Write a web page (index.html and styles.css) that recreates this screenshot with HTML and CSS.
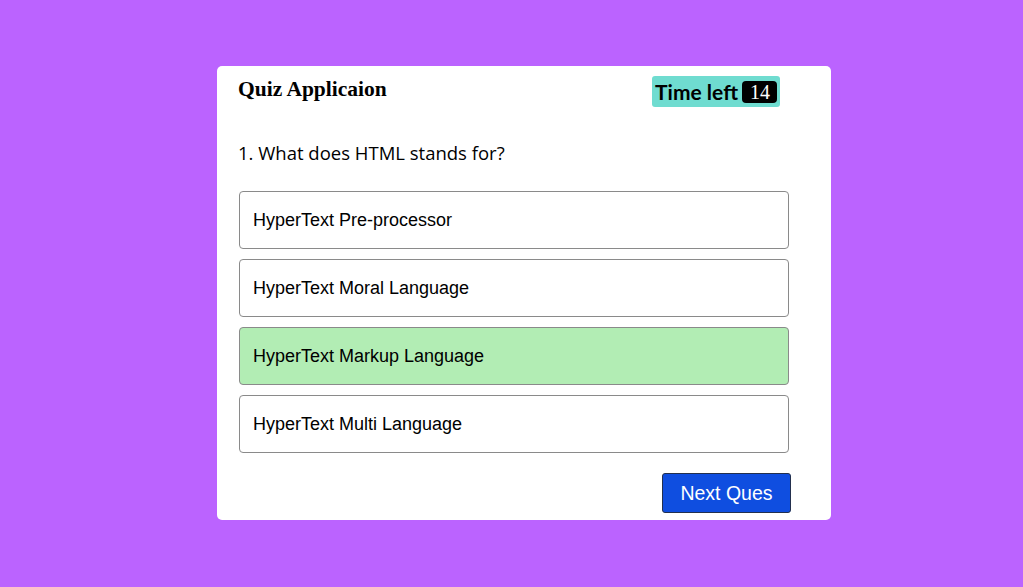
FILE: index.html
```html
<!DOCTYPE html>
<html>
<head>
<meta charset="utf-8">
<link rel="stylesheet" href="styles.css">
</head>
<body>
<div class="card">
  <div class="header">
    <h1 class="title">Quiz Applicaion</h1>
    <div class="timer"><span class="timer-label">Time left</span><span class="timer-num">14</span></div>
  </div>
  <p class="question">1. What does HTML stands for?</p>
  <div class="options">
    <div class="option">HyperText Pre-processor</div>
    <div class="option">HyperText Moral Language</div>
    <div class="option correct">HyperText Markup Language</div>
    <div class="option">HyperText Multi Language</div>
  </div>
  <div class="footer">
    <button class="next">Next Ques</button>
  </div>
</div>
</body>
</html>
```
FILE: styles.css
```css
html, body {
  margin: 0;
  padding: 0;
}
body {
  background: #bb63ff;
  width: 1023px;
  height: 587px;
  overflow: hidden;
}
.card {
  box-sizing: border-box;
  margin: 66px 0 0 217px;
  width: 614px;
  height: 454px;
  background: #fff;
  border-radius: 5px;
  padding: 10px 42px 0 21px;
}
.header {
  display: flex;
  justify-content: space-between;
  align-items: flex-start;
  padding-right: 9px;
}
.title {
  margin: 0;
  font-family: "Liberation Serif", serif;
  font-weight: bold;
  font-size: 21.5px;
  line-height: 26px;
  color: #000;
}
.timer {
  background: #6fdcd0;
  border-radius: 3px;
  display: flex;
  align-items: center;
  height: 31px;
  padding: 0 3px 0 3px;
  gap: 4px;
}
.timer-label {
  font-family: Lato, sans-serif;
  font-weight: bold;
  font-size: 21px;
  color: #000;
}
.timer-num {
  background: #000;
  color: #fff;
  font-family: "Liberation Serif", serif;
  font-size: 20px;
  line-height: 22px;
  border-radius: 4px;
  padding: 0 7px 0 8px;
}
.question {
  margin: 33px 0 0 0;
  font-family: "Open Sans", sans-serif;
  font-size: 18.5px;
  line-height: 26px;
  color: #000;
}
.options {
  margin: 25px 0 0 1px;
  display: flex;
  flex-direction: column;
  gap: 10px;
}
.option {
  box-sizing: border-box;
  height: 58px;
  border: 1px solid #8a8a8a;
  border-radius: 4px;
  padding: 0 13px;
  display: flex;
  align-items: center;
  font-family: "Liberation Sans", Arial, sans-serif;
  font-size: 18px;
  color: #000;
}
.option.correct {
  background: #b2edb4;
}
.footer {
  display: flex;
  justify-content: flex-end;
  margin-top: 20px;
}
.next {
  width: 129px;
  height: 40px;
  background: #0f4ee0;
  color: #fff;
  border: 1px solid #23304e;
  border-radius: 3px;
  font-family: "Liberation Sans", Arial, sans-serif;
  font-size: 19.5px;
  margin-right: -2px;
  cursor: pointer;
}
```
